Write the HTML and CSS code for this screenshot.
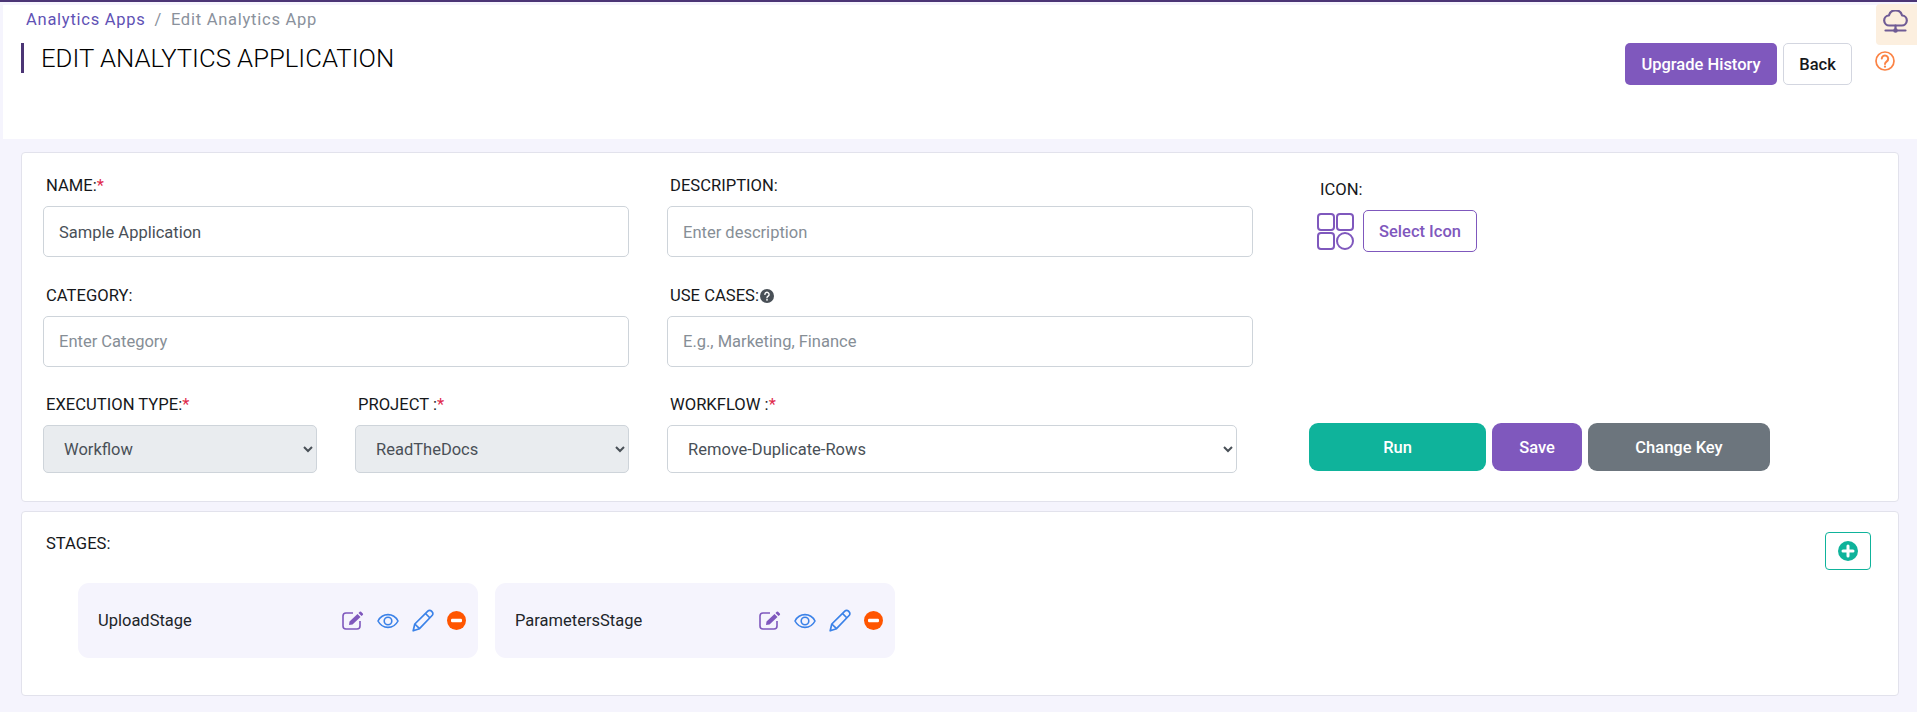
FILE: index.html
```html
<!DOCTYPE html>
<html lang="en">
<head>
    <meta charset="UTF-8">
    <meta name="viewport" content="width=device-width, initial-scale=1.0">
    <title>Edit Analytics Application</title>
    <link rel="stylesheet" href="styles.css">
</head>
<body>
    <header class="page-header">
        <div class="header-left">
            <nav class="breadcrumb">
                <a href="#">Analytics Apps</a>
                <span class="crumb-sep">/</span>
                <span class="crumb-current">Edit Analytics App</span>
            </nav>
            <h1 class="page-title">EDIT ANALYTICS APPLICATION</h1>
        </div>
        <div class="header-right">
            <button class="btn btn-purple btn-upgrade">Upgrade History</button>
            <button class="btn btn-back">Back</button>
            <svg class="help-icon" width="20" height="20" viewBox="0 0 20 20" fill="none" stroke="#fb8345" stroke-width="1.7" stroke-linecap="round">
                <circle cx="10" cy="10" r="9"/>
                <path d="M6.8 7.6a3.2 3.2 0 1 1 5 2.7c-1.1.8-1.8 1.3-1.8 2.6" stroke-width="2"/>
                <path d="M10 15.6v.1" stroke-width="2.2"/>
            </svg>
        </div>
        <div class="cloud-tab">
            <svg width="25" height="24" viewBox="0 0 25 24" fill="none" stroke="#6f5b95" stroke-width="2.2" stroke-linecap="round" stroke-linejoin="round">
                <path d="M6.500 15.500a5 5 0 0 1-.6-10 6.800 6.800 0 0 1 13.200 0 5 5 0 0 1-.6 10Z"/>
                <path d="M12.500 15.500v4M2.500 20.500h20"/>
                <circle cx="12.500" cy="20.500" r="2.300" fill="#6f5b95" stroke="none"/>
            </svg>
        </div>
    </header>

    <main class="content">
        <section class="card form-card">
            <div class="field">
                <label>NAME:<span class="req">*</span></label>
                <input type="text" class="form-input" value="Sample Application">
            </div>
            <div class="field">
                <label>DESCRIPTION:</label>
                <input type="text" class="form-input" placeholder="Enter description">
            </div>
            <div class="icon-field">
                <label>ICON:</label>
                <div class="icon-picker">
                    <svg width="37" height="37" viewBox="0 0 37 37" fill="none" stroke="#7f58bd" stroke-width="2">
                        <rect x="1" y="1" width="16" height="16" rx="3"/>
                        <rect x="20" y="1" width="16" height="16" rx="3"/>
                        <rect x="1" y="20" width="16" height="16" rx="3"/>
                        <circle cx="28" cy="28" r="8"/>
                    </svg>
                    <button class="btn btn-outline">Select Icon</button>
                </div>
            </div>

            <div class="field">
                <label>CATEGORY:</label>
                <input type="text" class="form-input" placeholder="Enter Category">
            </div>
            <div class="field">
                <label>USE CASES:<svg class="hint-icon" width="14" height="14" viewBox="0 0 14 14"><circle cx="7" cy="7" r="7" fill="#495057"/><path d="M4.9 5.4a2.1 2.1 0 1 1 3.3 1.7c-.7.5-1.2.8-1.2 1.6" fill="none" stroke="#fff" stroke-width="1.4" stroke-linecap="round"/><circle cx="7" cy="10.8" r=".9" fill="#fff"/></svg></label>
                <input type="text" class="form-input" placeholder="E.g., Marketing, Finance">
            </div>
            <div></div>

            <div class="select-pair">
                <div class="field">
                    <label>EXECUTION TYPE:<span class="req">*</span></label>
                    <select class="form-select" disabled>
                        <option>Workflow</option>
                    </select>
                </div>
                <div class="field">
                    <label>PROJECT :<span class="req">*</span></label>
                    <select class="form-select" disabled>
                        <option>ReadTheDocs</option>
                    </select>
                </div>
            </div>
            <div class="field workflow-field">
                <label>WORKFLOW :<span class="req">*</span></label>
                <select class="form-select">
                    <option>Remove-Duplicate-Rows</option>
                </select>
            </div>
            <div class="action-row">
                <button class="btn btn-action btn-run">Run</button>
                <button class="btn btn-action btn-purple btn-save">Save</button>
                <button class="btn btn-action btn-key">Change Key</button>
            </div>
        </section>

        <section class="card stages-card">
            <div class="stages-head">
                <label>STAGES:</label>
                <button class="btn-add">
                    <svg width="20" height="20" viewBox="0 0 20 20"><circle cx="10" cy="10" r="10" fill="#0fb39b"/><path d="M10 5v10M5 10h10" stroke="#fff" stroke-width="3" stroke-linecap="round"/></svg>
                </button>
            </div>
            <div class="stage-list">
                <div class="stage-item">
                    <span class="stage-name">UploadStage</span>
                    <div class="stage-icons">
                        <svg width="22" height="19" viewBox="0 0 22 19"><path d="M11 2H4a3 3 0 0 0-3 3v10a3 3 0 0 0 3 3h11a3 3 0 0 0 3-3v-5" fill="none" stroke="#7f58bd" stroke-width="1.6"/><path d="M7.500 10.500 15.500 3l3 3-8 7.500-3.500.5ZM16.500 2l1.200-1.200a1 1 0 0 1 1.400 0l1.700 1.700a1 1 0 0 1 0 1.400L19.500 5Z" fill="#7f58bd"/></svg>
                        <svg width="22" height="16" viewBox="0 0 22 16" fill="none" stroke="#3b82e8" stroke-width="1.6"><path d="M1 8c4.500-8.500 15.500-8.500 20 0-4.500 8.500-15.500 8.500-20 0Z"/><circle cx="11" cy="8" r="3.800"/></svg>
                        <svg width="22" height="23" viewBox="0 0 22 23" fill="none" stroke="#3b82e8" stroke-width="1.700" stroke-linejoin="round"><path d="M1.200 21.800 2.800 15 15.800 2.200a2.600 2.600 0 0 1 3.700 0l.6.6a2.600 2.600 0 0 1 0 3.700L7.500 19.700Z"/><path d="M2.800 15l4.700 4.700M13.500 4.500l4.500 4.500"/></svg>
                        <svg width="19" height="19" viewBox="0 0 19 19"><circle cx="9.500" cy="9.500" r="9.500" fill="#ff5500"/><rect x="4" y="7.800" width="11" height="3.400" rx="1.200" fill="#fff"/></svg>
                    </div>
                </div>
                <div class="stage-item">
                    <span class="stage-name">ParametersStage</span>
                    <div class="stage-icons">
                        <svg width="22" height="19" viewBox="0 0 22 19"><path d="M11 2H4a3 3 0 0 0-3 3v10a3 3 0 0 0 3 3h11a3 3 0 0 0 3-3v-5" fill="none" stroke="#7f58bd" stroke-width="1.6"/><path d="M7.500 10.500 15.500 3l3 3-8 7.500-3.500.5ZM16.500 2l1.200-1.200a1 1 0 0 1 1.400 0l1.700 1.700a1 1 0 0 1 0 1.400L19.500 5Z" fill="#7f58bd"/></svg>
                        <svg width="22" height="16" viewBox="0 0 22 16" fill="none" stroke="#3b82e8" stroke-width="1.6"><path d="M1 8c4.500-8.500 15.500-8.500 20 0-4.500 8.500-15.500 8.500-20 0Z"/><circle cx="11" cy="8" r="3.800"/></svg>
                        <svg width="22" height="23" viewBox="0 0 22 23" fill="none" stroke="#3b82e8" stroke-width="1.700" stroke-linejoin="round"><path d="M1.200 21.800 2.800 15 15.800 2.200a2.600 2.600 0 0 1 3.700 0l.6.6a2.600 2.600 0 0 1 0 3.700L7.500 19.700Z"/><path d="M2.800 15l4.700 4.700M13.500 4.500l4.500 4.500"/></svg>
                        <svg width="19" height="19" viewBox="0 0 19 19"><circle cx="9.500" cy="9.500" r="9.500" fill="#ff5500"/><rect x="4" y="7.800" width="11" height="3.400" rx="1.200" fill="#fff"/></svg>
                    </div>
                </div>
            </div>
        </section>
    </main>
</body>
</html>
```

FILE: styles.css
```css
* {
    box-sizing: border-box;
}

body {
    font-family: Roboto, 'Liberation Sans', sans-serif;
    margin: 0;
    min-height: 100vh;
    background: #f5f4fd;
    border-top: 2px solid #4b3575;
    color: #212529;
    font-size: 16.5px;
}

label {
    display: block;
    font-weight: 450;
    font-size: 16.6px;
    line-height: 21px;
    color: #16181b;
    margin: 0 0 10px 3px;
}

.req {
    color: #e0294a;
}

/* header */
.page-header {
    position: relative;
    display: flex;
    justify-content: space-between;
    height: 134px;
    margin: 3px 0 0 3px;
    padding-left: 18px;
    background: #fff;
}

.breadcrumb {
    margin: 4px 0 12px 5px;
    font-size: 16.5px;
    line-height: 22px;
    letter-spacing: 0.75px;
    color: #8a919c;
}

.breadcrumb a {
    color: #5f52b5;
    text-decoration: none;
}

.crumb-sep {
    margin: 0 4px;
}

.page-title {
    margin: 0;
    height: 30px;
    padding-left: 17px;
    border-left: 3px solid #4b3575;
    font-size: 25.7px;
    font-weight: 300;
    line-height: 30px;
    color: #000;
}

.header-right {
    display: flex;
    align-items: flex-start;
    gap: 6px;
    padding: 38px 22px 0 0;
}

.help-icon {
    margin: 8px 0 0 17px;
}

.cloud-tab {
    position: absolute;
    top: -1px;
    right: 0;
    width: 41px;
    height: 41px;
    padding: 6px 0 0 7px;
    background: #fcefdf;
    border-radius: 4px 0 0 4px;
}

/* buttons */
.btn {
    font-family: inherit;
    font-size: 16.5px;
    font-weight: 500;
    border: 1px solid transparent;
    border-radius: 5px;
    cursor: pointer;
}

.btn-purple {
    background: #7f58bd;
    color: #fff;
}

.btn-upgrade {
    width: 152px;
    height: 42px;
}

.btn-back {
    width: 69px;
    height: 42px;
    background: #fff;
    border-color: #d3d6e0;
    color: #16181b;
}

.btn-outline {
    width: 114px;
    height: 42px;
    background: #fff;
    border-color: #7f58bd;
    color: #7f58bd;
}

.btn-action {
    height: 48px;
    border-radius: 9px;
    color: #fff;
}

.btn-run {
    width: 177px;
    background: #0fb39b;
}

.btn-save {
    width: 90px;
}

.btn-key {
    width: 182px;
    background: #6c757d;
}

/* cards */
.content {
    padding: 13px 18px 17px 21px;
}

.card {
    background: #fff;
    border: 1px solid #e2e2ec;
    border-radius: 4px;
}

.form-card {
    display: grid;
    grid-template-columns: 586px 586px 1fr;
    column-gap: 38px;
    row-gap: 27.5px;
    padding: 22px 21px 28px;
}

.form-input,
.form-select {
    display: block;
    width: 100%;
    font-family: inherit;
    font-size: 16.5px;
    color: #495057;
    background: #fff;
    border: 1px solid #ced4da;
    border-radius: 5px;
    opacity: 1;
}

.form-input {
    height: 51px;
    padding: 1px 15px 0;
}

.form-input::placeholder {
    color: #868e96;
}

.form-select {
    height: 48px;
    padding: 0 16px;
}

.form-select:disabled {
    background: #e9ecef;
    color: #495057;
}

.select-pair {
    display: grid;
    grid-template-columns: 274px 274px;
    column-gap: 38px;
}

.workflow-field .form-select {
    width: 570px;
}

.hint-icon {
    margin-left: 1px;
    vertical-align: -2px;
}

.icon-field {
    padding: 4px 0 0 18px;
}

.icon-field label {
    margin-left: 11px;
}

.icon-picker {
    display: flex;
    align-items: center;
    gap: 9px;
    margin-left: 8px;
}

.action-row {
    display: flex;
    align-self: end;
    gap: 6px;
    margin: 0 0 2px 18px;
}

/* stages */
.stages-card {
    margin-top: 9px;
    padding: 20px 27px 37px 21px;
}

.stages-head {
    display: flex;
    justify-content: space-between;
    align-items: flex-start;
}

.stages-head label {
    margin-top: 1px;
    font-weight: 400;
}

.btn-add {
    display: flex;
    align-items: center;
    justify-content: center;
    width: 46px;
    height: 38px;
    padding: 0;
    background: #fff;
    border: 1px solid #0fb39b;
    border-radius: 4px;
    cursor: pointer;
}

.stage-list {
    display: flex;
    gap: 17px;
    margin-top: 13px;
    padding-left: 35px;
}

.stage-item {
    display: flex;
    justify-content: space-between;
    align-items: center;
    width: 400px;
    height: 75px;
    padding: 0 12px 0 20px;
    background: #f5f4fd;
    border-radius: 11px;
}

.stage-name {
    color: #212529;
}

.stage-icons {
    display: flex;
    align-items: center;
    gap: 13px;
}
```
